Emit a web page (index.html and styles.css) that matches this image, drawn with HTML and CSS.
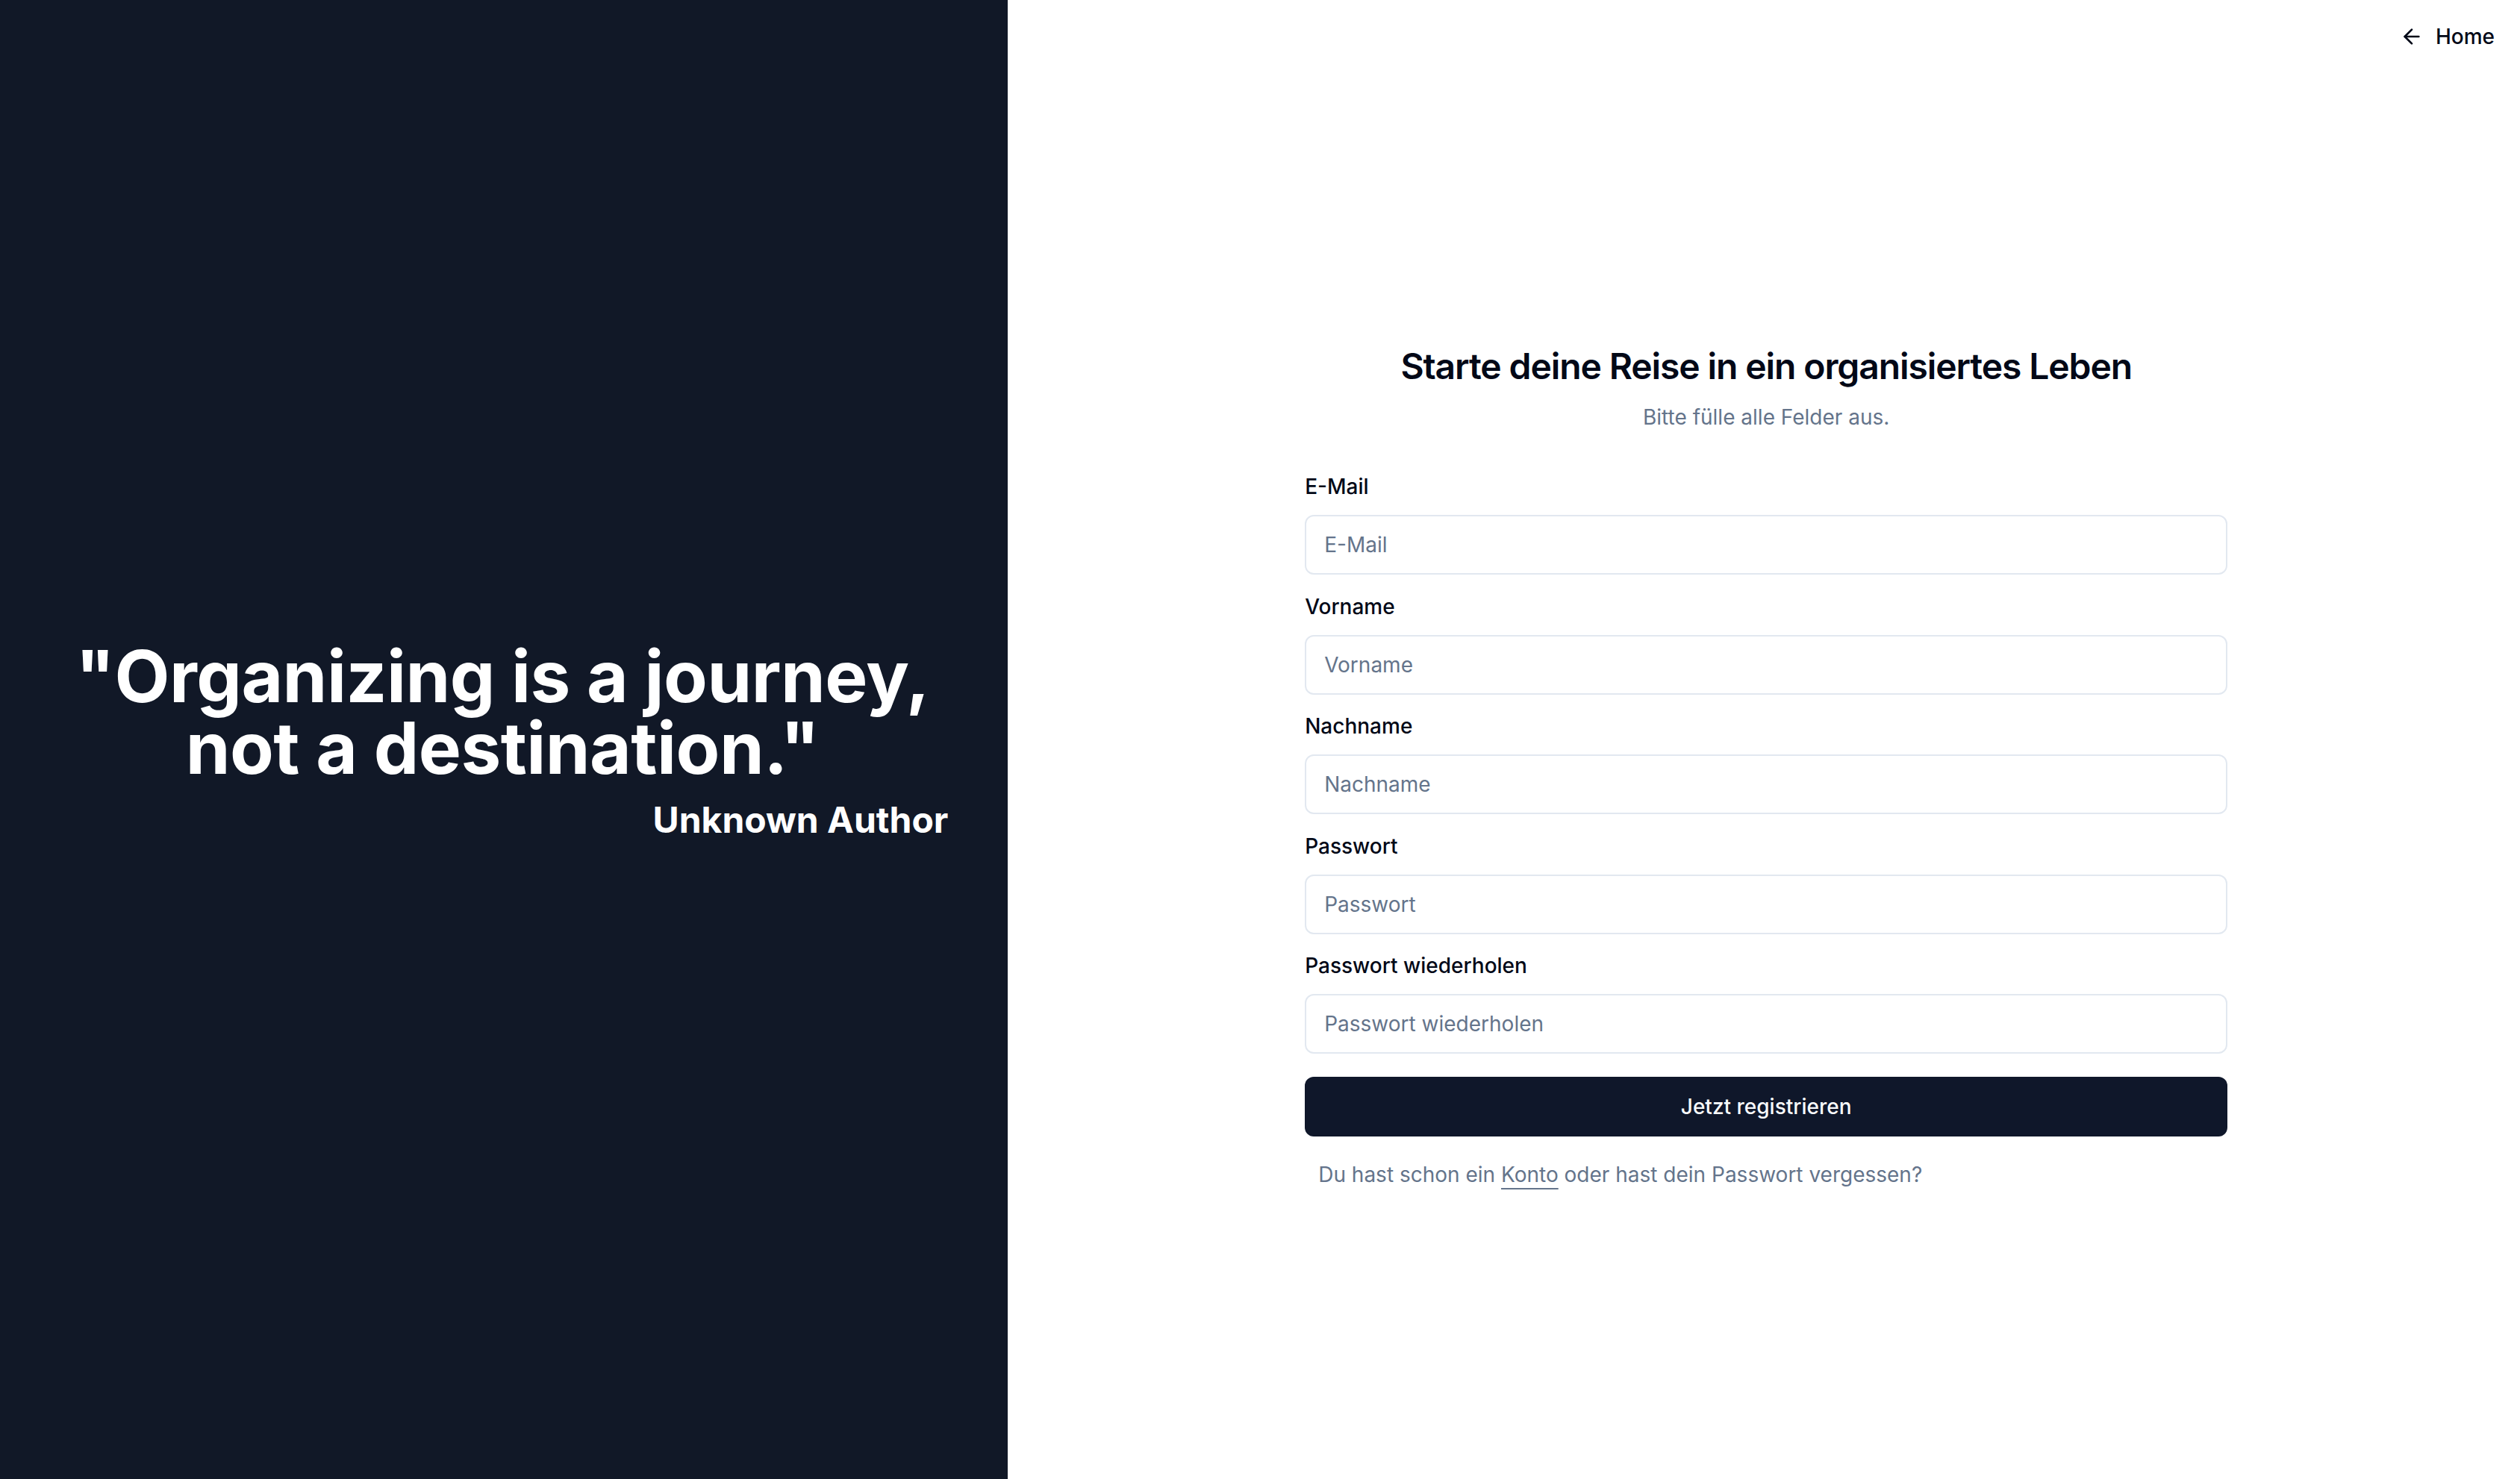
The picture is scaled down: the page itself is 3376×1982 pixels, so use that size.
FILE: index.html
```html
<!DOCTYPE html>
<html lang="de">
<head>
<meta charset="utf-8">
<title>Registrieren</title>
<link rel="stylesheet" href="styles.css">
</head>
<body>
<div class="page">
  <aside class="quote-panel">
    <div class="quote-block">
      <p class="quote">"Organizing is a journey, not a destination."</p>
      <p class="author">Unknown Author</p>
    </div>
  </aside>
  <main class="form-panel">
    <a class="home-link" href="#">
      <svg class="home-icon" viewBox="0 0 24 24" fill="none" stroke="currentColor" stroke-width="2" stroke-linecap="round" stroke-linejoin="round"><path d="m12 19-7-7 7-7"/><path d="M19 12H5"/></svg>
      <span>Home</span>
    </a>
    <div class="form-wrap">
      <h1 class="title">Starte deine Reise in ein organisiertes Leben</h1>
      <p class="subtitle">Bitte fülle alle Felder aus.</p>
      <form class="form">
        <div class="field">
          <label class="label" for="email">E-Mail</label>
          <input class="input" id="email" type="email" placeholder="E-Mail">
        </div>
        <div class="field">
          <label class="label" for="vorname">Vorname</label>
          <input class="input" id="vorname" type="text" placeholder="Vorname">
        </div>
        <div class="field">
          <label class="label" for="nachname">Nachname</label>
          <input class="input" id="nachname" type="text" placeholder="Nachname">
        </div>
        <div class="field">
          <label class="label" for="pw">Passwort</label>
          <input class="input" id="pw" type="password" placeholder="Passwort">
        </div>
        <div class="field">
          <label class="label" for="pw2">Passwort wiederholen</label>
          <input class="input" id="pw2" type="password" placeholder="Passwort wiederholen">
        </div>
        <button class="submit" type="button">Jetzt registrieren</button>
      </form>
      <p class="footer-text">Du hast schon ein <a class="link" href="#">Konto</a> oder hast dein Passwort vergessen?</p>
    </div>
  </main>
</div>
</body>
</html>
```
FILE: styles.css
```css
* { box-sizing: border-box; }
html, body { margin: 0; padding: 0; height: 100%; }
body {
  font-family: Inter, "Noto Sans", "Liberation Sans", sans-serif;
  color: #020817;
  background: #ffffff;
}
.page {
  display: grid;
  grid-template-columns: 2fr 3fr;
  height: 1982px;
}
.quote-panel {
  background: #111827;
  color: #ffffff;
  display: flex;
  align-items: center;
  padding: 0 80px;
}
.quote-block {
  width: 100%;
  padding-top: 6px;
}
.quote {
  margin: 0 4px 0 0;
  font-size: 96px;
  line-height: 96px;
  font-weight: 700;
  text-align: center;
  letter-spacing: -0.5px;
}
.author {
  margin: 17px 0 0;
  font-size: 48px;
  line-height: 64px;
  font-weight: 700;
  text-align: right;
}
.form-panel {
  position: relative;
  display: flex;
  flex-direction: column;
  align-items: center;
  padding-top: 459px;
  padding-left: 6px;
}
.home-link {
  position: absolute;
  top: 9px;
  right: 2px;
  height: 80px;
  padding: 0 32px;
  display: flex;
  align-items: center;
  gap: 16px;
  font-size: 28px;
  line-height: 40px;
  font-weight: 500;
  color: #020817;
  text-decoration: none;
}
.home-icon { width: 32px; height: 32px; }
.form-wrap {
  width: 1236px;
  display: flex;
  flex-direction: column;
}
.title {
  margin: 0;
  font-size: 48px;
  line-height: 64px;
  font-weight: 600;
  letter-spacing: -1.1px;
  text-align: center;
}
.subtitle {
  margin: 16px 0 0;
  font-size: 28px;
  line-height: 40px;
  color: #64748b;
  text-align: center;
}
.form {
  margin-top: 53px;
  display: flex;
  flex-direction: column;
}
.field {
  display: flex;
  flex-direction: column;
  gap: 18px;
  margin-bottom: 22.5px;
}
.field:last-of-type { margin-bottom: 31px; }
.label {
  font-size: 28px;
  line-height: 40px;
  font-weight: 500;
  color: #020817;
}
.input {
  height: 80px;
  width: 100%;
  border: 2px solid #e2e8f0;
  border-radius: 12px;
  padding: 0 24px;
  font-family: inherit;
  font-size: 28px;
  color: #020817;
  background: #ffffff;
  outline: none;
}
.input::placeholder { color: #64748b; }
.submit {
  height: 80px;
  width: 100%;
  border: 0;
  border-radius: 12px;
  background: #0f172a;
  color: #f8fafc;
  font-family: inherit;
  font-size: 28px;
  font-weight: 500;
}
.footer-text {
  margin: 31px 0 0;
  padding-left: 18px;
  font-size: 28px;
  line-height: 40px;
  color: #64748b;
}
.link {
  color: #64748b;
  text-decoration: underline;
  text-decoration-thickness: 2px;
  text-underline-offset: 8px;
}
```
